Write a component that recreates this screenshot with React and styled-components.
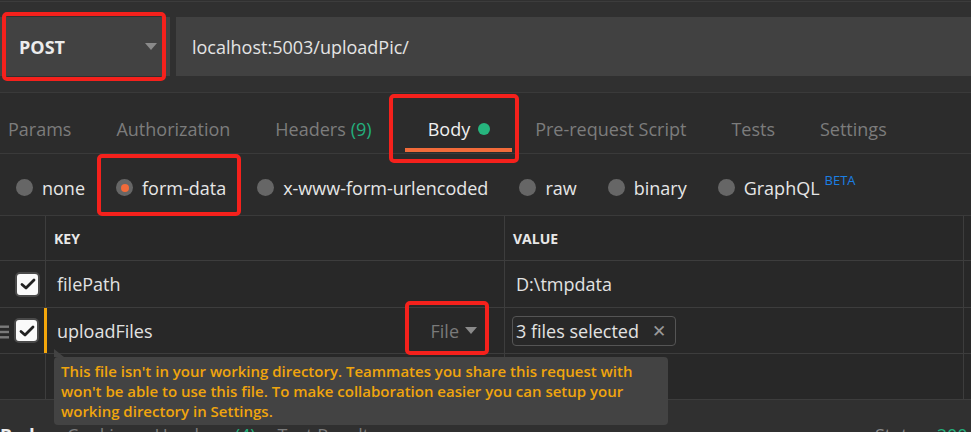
import styled, { createGlobalStyle } from 'styled-components'

const Global = createGlobalStyle`
  html, body { margin: 0; padding: 0; background: #2b2b2b; }
  * { box-sizing: border-box; }
`;

const tabs = [
  { label: 'Params' },
  { label: 'Authorization' },
  { label: 'Headers', count: '(9)' },
  { label: 'Body', active: true, dot: true },
  { label: 'Pre-request Script' },
  { label: 'Tests' },
  { label: 'Settings' },
];

const bodyTypes = ['none', 'form-data', 'x-www-form-urlencoded', 'raw', 'binary', 'GraphQL'];

function Check() {
  return (
    <CheckBox>
      <svg width="16" height="14" viewBox="0 0 16 14">
        <path d="M2 7.5 L6 11 L14 3" fill="none" stroke="#222" strokeWidth="2.8" strokeLinecap="round" strokeLinejoin="round" />
      </svg>
    </CheckBox>
  )
}

function DragHandle() {
  return (
    <Handle width="9" height="14" viewBox="0 0 9 14">
      <rect x="0" y="0.5" width="9" height="2.4" fill="#7a7a7a" />
      <rect x="0" y="5.8" width="9" height="2.4" fill="#7a7a7a" />
      <rect x="0" y="11.1" width="9" height="2.4" fill="#7a7a7a" />
    </Handle>
  )
}

export default function App() {
  return (
    <Frame>
      <Global />
      <TopBar>
        <Marked $t={-5} $r={4} $b={-4} $l={2}>
          <Method>
            POST
            <Caret />
          </Method>
        </Marked>
        <Url>localhost:5003/uploadPic/</Url>
      </TopBar>

      <Tabs>
        {tabs.map((t) => {
          const tab = (
            <Tab key={t.label} $active={t.active}>
              {t.label}
              {t.count && <Count>{t.count}</Count>}
              {t.dot && <Dot />}
            </Tab>
          );
          return t.active ? (
            <ActiveMark key={t.label} $t={1} $r={-29} $b={-10} $l={-39}>{tab}</ActiveMark>
          ) : tab;
        })}
      </Tabs>

      <Radios>
        {bodyTypes.map((type) => {
          const item = (
            <RadioItem key={type}>
              <Radio $on={type === 'form-data'} />
              {type}
              {type === 'GraphQL' && <Beta>BETA</Beta>}
            </RadioItem>
          );
          return type === 'form-data' ? (
            <Marked key={type} $t={-22} $r={-15} $b={-16} $l={-19}>{item}</Marked>
          ) : item;
        })}
      </Radios>

      <Table>
        <Row $h={44}>
          <Gutter />
          <KeyCell><HeadText>KEY</HeadText></KeyCell>
          <ValueCell><HeadText>VALUE</HeadText></ValueCell>
          <EndCell />
        </Row>
        <Row $h={46}>
          <Gutter><Check /></Gutter>
          <KeyCell>filePath</KeyCell>
          <ValueCell>D:\tmpdata</ValueCell>
          <EndCell />
        </Row>
        <Row $h={45}>
          <Gutter $warn>
            <DragHandle />
            <Check />
          </Gutter>
          <KeyCell>
            uploadFiles
            <Marked $t={-18} $r={-12} $b={-12} $l={-26}>
              <FileType>File<SmallCaret /></FileType>
            </Marked>
            <Tooltip>
              This file isn't in your working directory. Teammates you share this request with<br />
              won't be able to use this file. To make collaboration easier you can setup your<br />
              working directory in Settings.
            </Tooltip>
          </KeyCell>
          <ValueCell>
            <Chip>3 files selected <Close>✕</Close></Chip>
          </ValueCell>
          <EndCell />
        </Row>
        <Row $h={45}>
          <Gutter />
          <KeyCell />
          <ValueCell />
          <EndCell />
        </Row>
      </Table>

      <Bottom>
        <BottomTabs>
          <BottomTab $active>Body</BottomTab>
          <BottomTab>Cookies</BottomTab>
          <BottomTab>Headers <Count>(4)</Count></BottomTab>
          <BottomTab>Test Results</BottomTab>
        </BottomTabs>
        <Status>Status: <Green>200 OK</Green></Status>
      </Bottom>
    </Frame>
  )
}

const Frame = styled.div`
  position: relative;
  width: 971px;
  height: 432px;
  overflow: hidden;
  background: #303030;
  font-family: "Open Sans", "Noto Sans", sans-serif;
  color: #e6e6e6;
`;
const Marked = styled.div`
  position: relative;
  display: flex;
  &::after {
    content: '';
    position: absolute;
    top: ${(p) => p.$t}px;
    right: ${(p) => p.$r}px;
    bottom: ${(p) => p.$b}px;
    left: ${(p) => p.$l}px;
    border: 4px solid #f5211c;
    border-radius: 5px;
    pointer-events: none;
    z-index: 5;
  }
`;
const ActiveMark = styled(Marked)`
  margin-left: 11px;
`;
const TopBar = styled.div`
  display: flex;
  gap: 6px;
  height: 92px;
  margin-top: 1px;
  border-top: 1px solid #3c3c3c;
  border-bottom: 1px solid #3a3a3a;
  padding: 15px 0 15px 0;
  background: #303030;
`;
const Method = styled.div`
  width: 170px;
  height: 59px;
  display: flex;
  align-items: center;
  justify-content: space-between;
  padding: 0 13px 0 19px;
  background: #424242;
  font-weight: 700;
  font-size: 18px;
  color: #ececec;
`;
const Caret = styled.span`
  width: 0;
  height: 0;
  border-left: 6px solid transparent;
  border-right: 6px solid transparent;
  border-top: 7px solid #8a8a8a;
`;
const Url = styled.div`
  flex: 1;
  height: 59px;
  display: flex;
  align-items: center;
  padding-left: 16px;
  background: #414141;
  font-size: 18px;
  color: #e4e4e4;
`;
const Tabs = styled.div`
  display: flex;
  align-items: stretch;
  gap: 45px;
  height: 61px;
  padding-left: 8px;
  background: #2c2c2c;
  border-bottom: 1px solid #3a3a3a;
`;
const Tab = styled.div`
  position: relative;
  display: flex;
  align-items: center;
  padding-top: 11px;
  font-size: 18px;
  color: ${(p) => (p.$active ? '#f0f0f0' : '#7c7c7c')};
  ${(p) => p.$active && `
    &::before {
      content: '';
      position: absolute;
      left: -23px;
      right: -22px;
      bottom: 1px;
      height: 4px;
      background: #f26b3a;
    }
  `}
`;
const Count = styled.span`
  margin-left: 5px;
  color: #23b07d;
`;
const Dot = styled.span`
  width: 12px;
  height: 12px;
  margin-left: 8px;
  border-radius: 50%;
  background: #26b57e;
`;
const Radios = styled.div`
  display: flex;
  align-items: center;
  gap: 31px;
  height: 62px;
  padding: 6px 0 0 16px;
  background: #2b2b2b;
  border-bottom: 1px solid #3a3a3a;
`;
const RadioItem = styled.div`
  display: flex;
  align-items: center;
  gap: 9px;
  font-size: 18px;
  color: #e6e6e6;
`;
const Radio = styled.span`
  width: 17px;
  height: 17px;
  border-radius: 50%;
  background: #666;
  display: flex;
  align-items: center;
  justify-content: center;
  &::after {
    content: '';
    width: 8px;
    height: 8px;
    border-radius: 50%;
    background: ${(p) => (p.$on ? '#f26b3a' : 'transparent')};
  }
`;
const Beta = styled.span`
  align-self: flex-start;
  margin: -4px 0 0 -4px;
  font-size: 13px;
  line-height: 16px;
  color: #1b7fe3;
`;
const Table = styled.div`
  background: #282828;
`;
const Row = styled.div`
  display: grid;
  grid-template-columns: 46px 459px 459px 1fr;
  height: ${(p) => p.$h + 1}px;
  border-bottom: 1px solid #3d3d3d;
`;
const Gutter = styled.div`
  position: relative;
  display: flex;
  align-items: center;
  justify-content: flex-end;
  padding-right: 5px;
  border-right: ${(p) => (p.$warn ? '3px solid #f5a70b' : '1px solid #3d3d3d')};
  margin-right: ${(p) => (p.$warn ? '-1px' : '0')};
`;
const Handle = styled.svg`
  position: absolute;
  left: 0;
  top: 17px;
`;
const CheckBox = styled.span`
  width: 25px;
  height: 25px;
  display: flex;
  align-items: center;
  justify-content: center;
  border-radius: 5px;
  background: #fafafa;
  border: 2px solid #4a4a4a;
`;
const KeyCell = styled.div`
  position: relative;
  display: flex;
  align-items: center;
  justify-content: space-between;
  padding: 0 27px 0 11px;
  border-right: 1px solid #3d3d3d;
  font-size: 18px;
  color: #e2e2e2;
`;
const ValueCell = styled.div`
  display: flex;
  align-items: center;
  padding-left: 11px;
  border-right: 1px solid #3d3d3d;
  font-size: 18px;
  color: #e2e2e2;
`;
const EndCell = styled.div``;
const HeadText = styled.span`
  margin-left: -3px;
  font-size: 14px;
  font-weight: 700;
  color: #e8e8e8;
`;
const FileType = styled.span`
  display: flex;
  align-items: center;
  gap: 6px;
  color: #7a7a7a;
`;
const SmallCaret = styled.span`
  width: 0;
  height: 0;
  border-left: 6px solid transparent;
  border-right: 6px solid transparent;
  border-top: 7px solid #8a8a8a;
`;
const Chip = styled.span`
  display: flex;
  align-items: center;
  gap: 13px;
  height: 30px;
  margin-left: -4px;
  padding: 0 9px 0 3px;
  border: 1px solid #555;
  border-radius: 4px;
  font-size: 18px;
`;
const Close = styled.span`
  font-size: 17px;
  color: #999;
`;
const Tooltip = styled.div`
  position: absolute;
  left: 8px;
  top: 49px;
  width: 614px;
  height: 68px;
  padding: 4px 0 0 7px;
  background: #434343;
  border-radius: 4px;
  font-size: 15px;
  line-height: 20px;
  font-weight: 600;
  white-space: nowrap;
  color: #f0a50d;
  z-index: 4;
  &::before {
    content: '';
    position: absolute;
    left: 0;
    top: -8px;
    border-left: 10px solid #434343;
    border-top: 8px solid transparent;
  }
`;
const Bottom = styled.div`
  display: flex;
  justify-content: space-between;
  height: 40px;
  padding: 23px 0 0 0;
  background: #303030;
`;
const BottomTabs = styled.div`
  display: flex;
  gap: 22px;
`;
const BottomTab = styled.span`
  font-size: 18px;
  font-weight: ${(p) => (p.$active ? 700 : 400)};
  color: ${(p) => (p.$active ? '#eee' : '#7c7c7c')};
  line-height: 24px;
`;
const Status = styled.span`
  width: 96px;
  white-space: nowrap;
  font-size: 18px;
  line-height: 24px;
  color: #8a8a8a;
`;
const Green = styled.span`
  color: #23b07d;
`;
